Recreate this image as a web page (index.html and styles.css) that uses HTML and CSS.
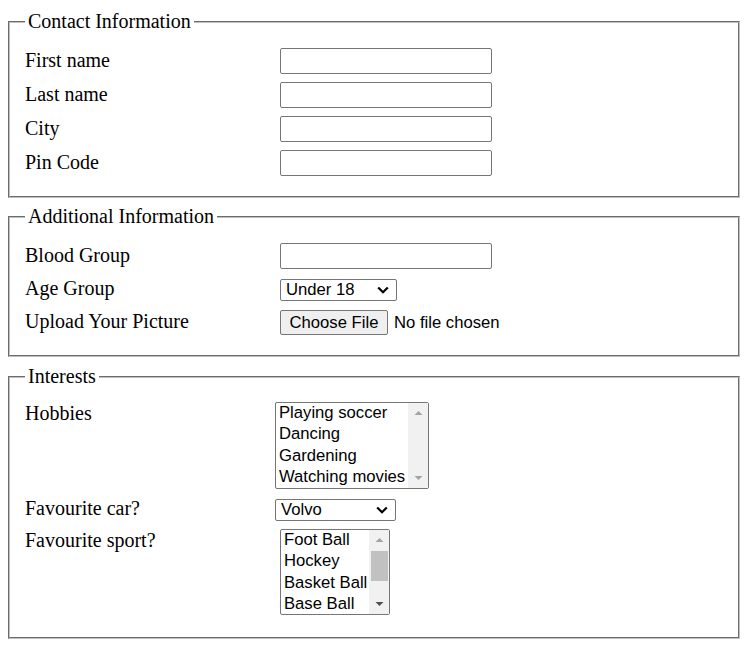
FILE: index.html
```html
<!DOCTYPE html>
<html>
<head>
<meta charset="utf-8">
<link rel="stylesheet" href="styles.css">
</head>
<body>
<form class="page">
  <fieldset class="box box-contact">
    <legend class="legend">Contact Information</legend>
    <div class="rows">
      <label class="lbl">First name</label><input class="txt" type="text">
      <label class="lbl">Last name</label><input class="txt" type="text">
      <label class="lbl">City</label><input class="txt" type="text">
      <label class="lbl">Pin Code</label><input class="txt" type="text">
    </div>
  </fieldset>

  <fieldset class="box box-additional">
    <legend class="legend">Additional Information</legend>
    <div class="rows">
      <label class="lbl">Blood Group</label><input class="txt" type="text">
      <label class="lbl">Age Group</label>
      <span class="sel-wrap sel-age">
        <select class="sel"><option>Under 18</option></select>
        <svg class="chev" width="12" height="8" viewBox="0 0 12 8"><path d="M1.2 1.5 L6 6.3 L10.8 1.5" fill="none" stroke="#000" stroke-width="2.2"/></svg>
      </span>
      <label class="lbl">Upload Your Picture</label>
      <span class="file">
        <button type="button" class="file-btn">Choose File</button><span class="file-txt">No file chosen</span>
      </span>
    </div>
  </fieldset>

  <fieldset class="box box-interests">
    <legend class="legend">Interests</legend>
    <div class="rows rows-a">
      <label class="lbl lbl-top">Hobbies</label>
      <div class="list list-hobbies">
        <div class="list-items">
          <div class="item">Playing soccer</div>
          <div class="item">Dancing</div>
          <div class="item">Gardening</div>
          <div class="item">Watching movies</div>
        </div>
        <div class="sbar">
          <svg class="arr" width="9" height="6" viewBox="0 0 9 6"><path d="M0.5 5 L4.5 1 L8.5 5 Z" fill="#a3a3a3"/></svg>
          <div class="track"></div>
          <svg class="arr" width="9" height="6" viewBox="0 0 9 6"><path d="M0.5 1 L4.5 5 L8.5 1 Z" fill="#a3a3a3"/></svg>
        </div>
      </div>
      <label class="lbl">Favourite car?</label>
      <span class="sel-wrap sel-car">
        <select class="sel"><option>Volvo</option></select>
        <svg class="chev" width="12" height="8" viewBox="0 0 12 8"><path d="M1.2 1.5 L6 6.3 L10.8 1.5" fill="none" stroke="#000" stroke-width="2.2"/></svg>
      </span>
    </div>
    <div class="rows rows-b">
      <label class="lbl lbl-top">Favourite sport?</label>
      <div class="list list-sport">
        <div class="list-items">
          <div class="item">Foot Ball</div>
          <div class="item">Hockey</div>
          <div class="item">Basket Ball</div>
          <div class="item">Base Ball</div>
        </div>
        <div class="sbar">
          <svg class="arr" width="9" height="6" viewBox="0 0 9 6"><path d="M0.5 5 L4.5 1 L8.5 5 Z" fill="#a3a3a3"/></svg>
          <div class="track"><div class="thumb"></div></div>
          <svg class="arr" width="9" height="6" viewBox="0 0 9 6"><path d="M0.5 1 L4.5 5 L8.5 1 Z" fill="#505050"/></svg>
        </div>
      </div>
    </div>
  </fieldset>
</form>
</body>
</html>
```

FILE: styles.css
```css
html, body {
  margin: 0;
  padding: 0;
  background: #fff;
}
.page {
  padding: 10px 9px 0 8px;
  margin: 0;
  font-family: "Liberation Serif", "Times New Roman", serif;
  font-size: 20px;
  color: #000;
}
.box {
  margin: 0;
  border: 2px groove #c0c0c0;
  padding: 0 15px 20px 15px;
  min-width: 0;
}
.box-additional { padding-bottom: 20px; margin-top: 7px; }
.box-interests { padding-bottom: 22px; margin-top: 8px; }
.legend {
  padding: 0 3px;
  margin-left: 0;
  line-height: 23px;
}
.rows {
  display: grid;
  grid-template-columns: 255px auto;
  justify-content: start;
  align-items: center;
  row-gap: 8px;
  margin-top: 15px;
}
.rows-a {
  grid-template-columns: 250px auto;
  margin-top: 14px;
  row-gap: 8px;
}
.rows-b {
  margin-top: 7px;
}
.lbl {
  line-height: 23px;
  padding-bottom: 2px;
}
.lbl-top {
  align-self: start;
  padding-bottom: 0;
}
.txt {
  box-sizing: border-box;
  width: 212px;
  height: 26px;
  margin: 0;
  border: 1px solid #767676;
  border-radius: 2px;
  padding: 1px 2px;
  font-family: "Liberation Sans", Arial, sans-serif;
  font-size: 16.67px;
}
.sel-wrap {
  position: relative;
  display: inline-block;
  justify-self: start;
}
.sel {
  -webkit-appearance: none;
  appearance: none;
  box-sizing: border-box;
  height: 22px;
  margin: 0;
  border: 1px solid #767676;
  border-radius: 2px;
  padding: 0 0 0 5px;
  background: #fff;
  color: #000;
  font-family: "Liberation Sans", Arial, sans-serif;
  font-size: 16.67px;
  line-height: 20px;
  display: block;
}
.sel-age .sel { width: 117px; }
.sel-car .sel { width: 121px; }
.chev {
  position: absolute;
  right: 8px;
  top: 7px;
  pointer-events: none;
}
.file {
  display: flex;
  align-items: center;
  font-family: "Liberation Sans", Arial, sans-serif;
  font-size: 16.67px;
}
.file-btn {
  box-sizing: border-box;
  height: 25px;
  width: 108px;
  margin: 0 6px 0 0;
  padding: 0;
  border: 1px solid #767676;
  border-radius: 2px;
  background: #efefef;
  color: #000;
  font-family: "Liberation Sans", Arial, sans-serif;
  font-size: 16.67px;
}
.file-txt { color: #000; }
.list {
  box-sizing: border-box;
  display: flex;
  border: 1px solid #767676;
  border-radius: 2px;
  background: #fff;
  font-family: "Liberation Sans", Arial, sans-serif;
  font-size: 16.67px;
  justify-self: start;
}
.list-hobbies { width: 154px; height: 87px; }
.list-sport { width: 110px; height: 86px; }
.list-items {
  flex: 1;
  padding-left: 3px;
  overflow: hidden;
}
.item {
  height: 21.3px;
  line-height: 20px;
  white-space: nowrap;
}
.sbar {
  width: 20px;
  background: #f1f1f1;
  display: flex;
  flex-direction: column;
  align-items: center;
}
.arr {
  flex: none;
  margin: 7px 0;
}
.track {
  flex: 1;
  width: 100%;
  position: relative;
}
.thumb {
  position: absolute;
  left: 2px;
  right: 1px;
  top: 1px;
  height: 30px;
  background: #c1c1c1;
}
```
